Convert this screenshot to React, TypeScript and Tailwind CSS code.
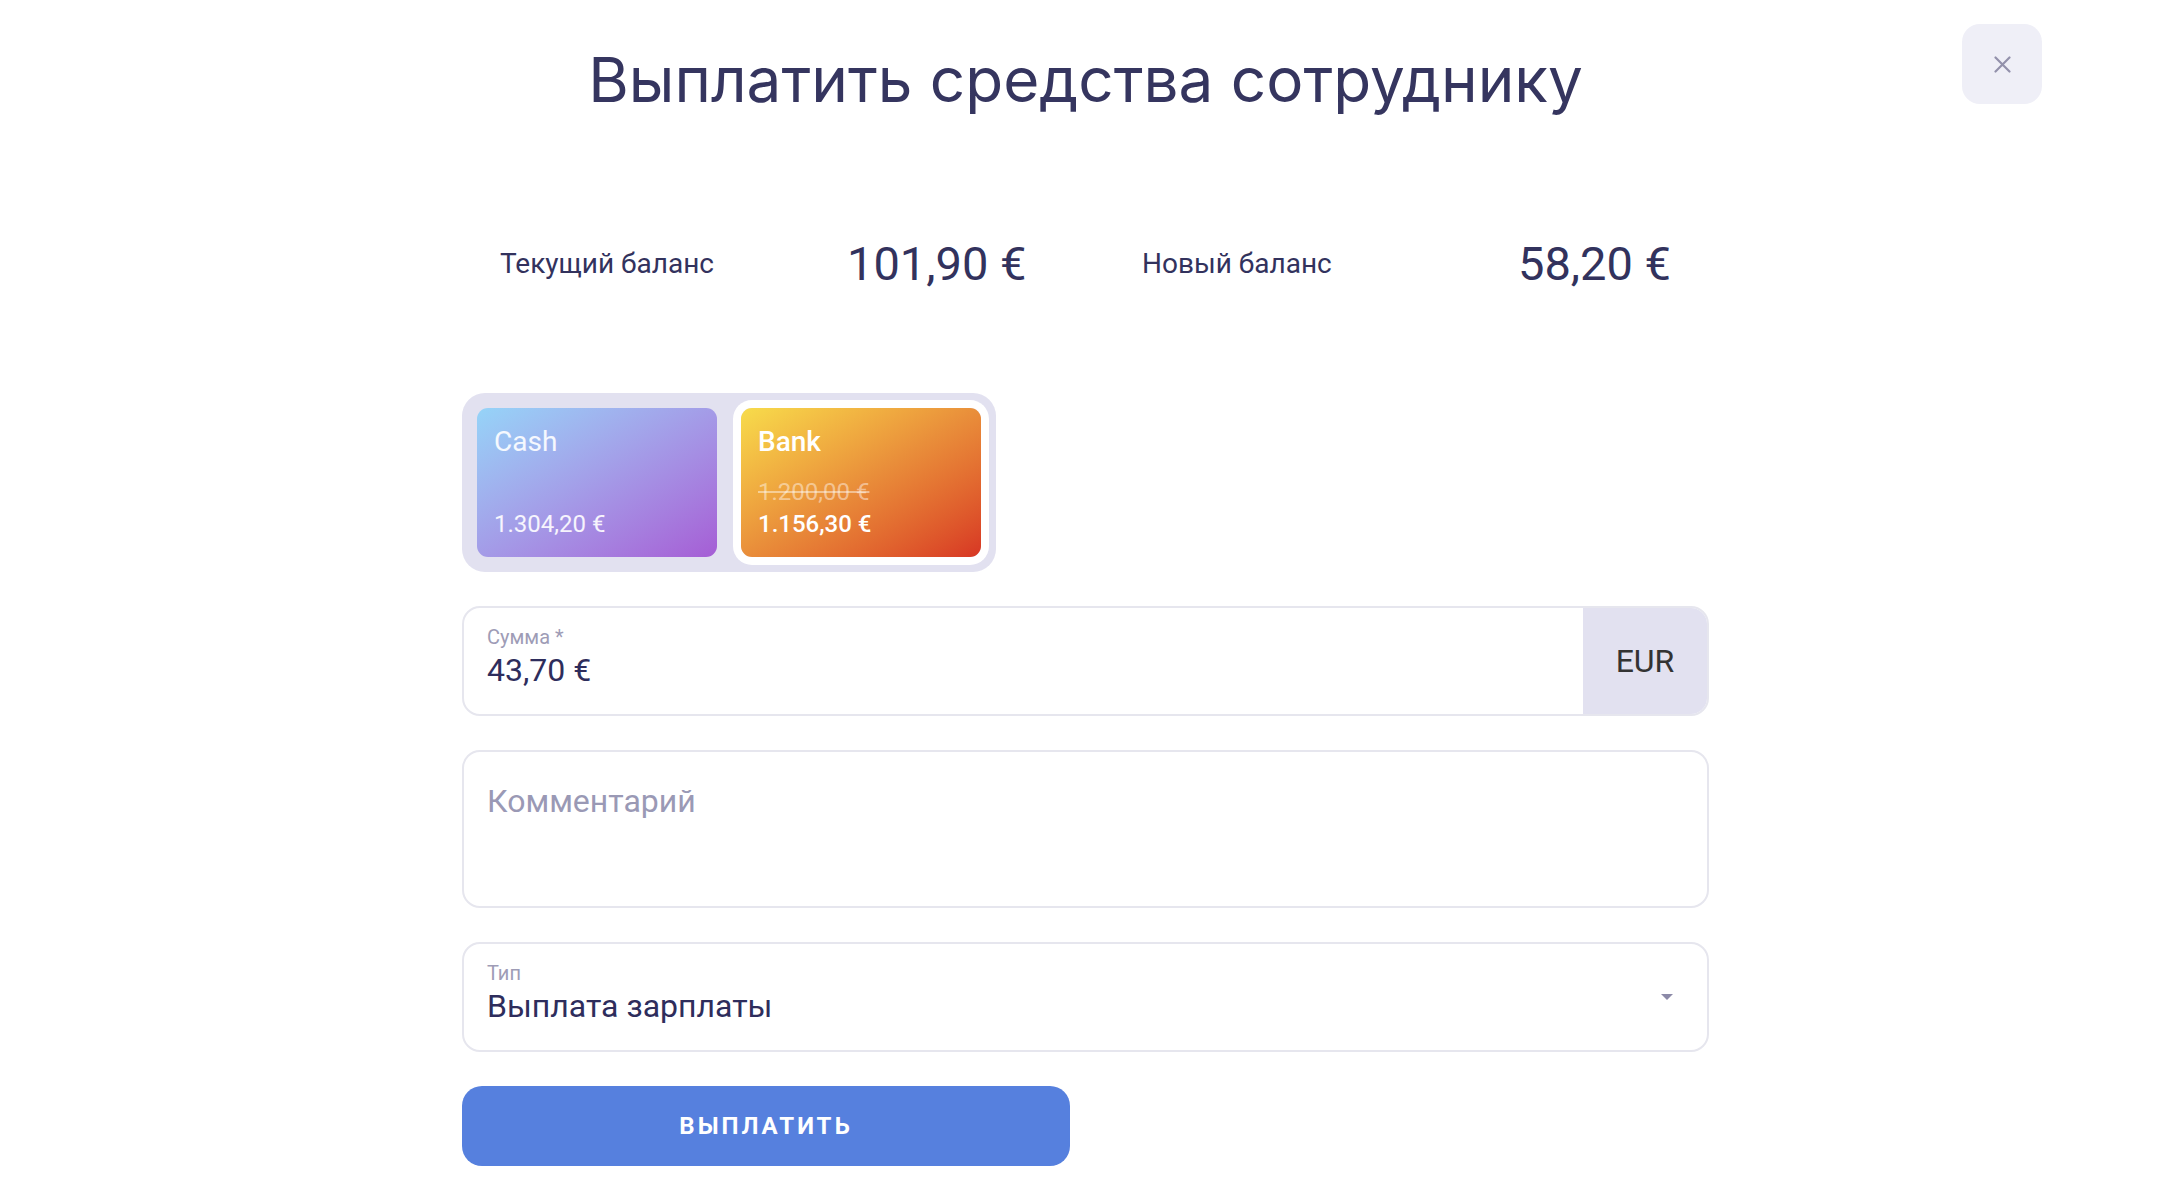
const balances = [
  { label: "Текущий баланс", value: "101,90 €" },
  { label: "Новый баланс", value: "58,20 €" },
];

function CloseIcon() {
  return (
    <svg width="17" height="17" viewBox="0 0 17 17" fill="none">
      <path d="M1.5 1.5L15.5 15.5M15.5 1.5L1.5 15.5" stroke="#9391ab" strokeWidth="2.2" strokeLinecap="round" />
    </svg>
  );
}

function SelectArrow() {
  return (
    <svg width="12" height="6" viewBox="0 0 12 6">
      <path d="M0 0H12L6 6Z" fill="#8c8aa8" />
    </svg>
  );
}

export default function App() {
  return (
    <div className="relative min-h-screen w-full bg-white font-['Roboto',sans-serif] text-[#32325d]">
      <button
        type="button"
        className="absolute top-[24px] right-[120px] flex h-[80px] w-[80px] items-center justify-center rounded-[18px] bg-[#efeff7]"
        aria-label="Закрыть"
      >
        <CloseIcon />
      </button>

      <div className="ml-[462px] w-[1247px] pt-[43px]">
        <h1 className="text-center font-['Inter',sans-serif] text-[62px] font-normal leading-[74px] text-[#35355f]">
          Выплатить средства сотруднику
        </h1>

        <div className="mt-[112px] grid h-[56px] grid-cols-[385px_295px_376px_191px] items-center">
          <div className="pl-[38px] text-[28px] text-[#32325d]">{balances[0].label}</div>
          <div className="text-[47px] text-[#32325d]">{balances[0].value}</div>
          <div className="text-[28px] text-[#32325d]">{balances[1].label}</div>
          <div className="pr-[4px] text-[47px] text-[#32325d]">{balances[1].value}</div>
        </div>

        <div className="mt-[108px] flex flex-col gap-[34px]">
          <div className="flex w-fit gap-[24px] rounded-[23px] bg-[#e2e1f0] p-[15px]">
            <div className="flex h-[149px] w-[240px] flex-col justify-between rounded-[11px] bg-linear-to-br from-[#95d4f8] to-[#a55dd5] px-[17px] pt-[18px] pb-[19px] text-white/90">
              <div className="text-[28px] leading-[32px]">Cash</div>
              <div className="text-[24px] leading-[28px]">1.304,20 €</div>
            </div>
            <div className="flex h-[149px] w-[240px] flex-col justify-between rounded-[11px] bg-linear-to-br from-[#f7dc4b] via-[#e98e3a] to-[#d73524] px-[17px] pt-[18px] pb-[19px] text-white ring-8 ring-white">
              <div className="text-[28px] font-medium leading-[32px]">Bank</div>
              <div className="flex flex-col gap-[4px]">
                <div className="text-[24px] leading-[28px] text-white/45 line-through">1.200,00 €</div>
                <div className="text-[24px] font-medium leading-[28px]">1.156,30 €</div>
              </div>
            </div>
          </div>

          <div className="flex h-[110px] overflow-hidden rounded-[18px] border-2 border-[#e6e6ee]">
            <div className="flex flex-1 flex-col pt-[17px] pl-[23px]">
              <div className="text-[20px] leading-[24px] text-[#9e9cb6]">Сумма *</div>
              <div className="mt-[2px] text-[32px] leading-[38px] text-[#2e2d5c]">43,70 €</div>
            </div>
            <div className="flex w-[124px] items-center justify-center bg-[#e2e1f0] text-[32px] text-[#333333]">
              EUR
            </div>
          </div>

          <div className="h-[158px] rounded-[18px] border-2 border-[#e6e6ee] pt-[30px] pl-[23px]">
            <div className="text-[32px] leading-[38px] text-[#9a99b5]">Комментарий</div>
          </div>

          <div className="flex h-[110px] items-center rounded-[18px] border-2 border-[#e6e6ee] pr-[34px]">
            <div className="flex flex-1 flex-col self-start pt-[17px] pl-[23px]">
              <div className="text-[20px] leading-[24px] text-[#9e9cb6]">Тип</div>
              <div className="mt-[2px] text-[32px] leading-[38px] text-[#2e2d5c]">Выплата зарплаты</div>
            </div>
            <SelectArrow />
          </div>

          <button
            type="button"
            className="h-[80px] w-[608px] rounded-[20px] bg-[#5680de] text-[24px] font-bold tracking-[3px] text-white"
          >
            ВЫПЛАТИТЬ
          </button>
        </div>
      </div>
    </div>
  );
}
